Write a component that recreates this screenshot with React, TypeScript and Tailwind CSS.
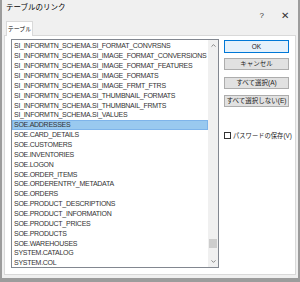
import { ChevronUp, ChevronDown } from "lucide-react"

const tables = [
  "SI_INFORMTN_SCHEMA.SI_FORMAT_CONVRSNS",
  "SI_INFORMTN_SCHEMA.SI_IMAGE_FORMAT_CONVERSIONS",
  "SI_INFORMTN_SCHEMA.SI_IMAGE_FORMAT_FEATURES",
  "SI_INFORMTN_SCHEMA.SI_IMAGE_FORMATS",
  "SI_INFORMTN_SCHEMA.SI_IMAGE_FRMT_FTRS",
  "SI_INFORMTN_SCHEMA.SI_THUMBNAIL_FORMATS",
  "SI_INFORMTN_SCHEMA.SI_THUMBNAIL_FRMTS",
  "SI_INFORMTN_SCHEMA.SI_VALUES",
  "SOE.ADDRESSES",
  "SOE.CARD_DETAILS",
  "SOE.CUSTOMERS",
  "SOE.INVENTORIES",
  "SOE.LOGON",
  "SOE.ORDER_ITEMS",
  "SOE.ORDERENTRY_METADATA",
  "SOE.ORDERS",
  "SOE.PRODUCT_DESCRIPTIONS",
  "SOE.PRODUCT_INFORMATION",
  "SOE.PRODUCT_PRICES",
  "SOE.PRODUCTS",
  "SOE.WAREHOUSES",
  "SYSTEM.CATALOG",
  "SYSTEM.COL",
]

const selected = "SOE.ADDRESSES"

const font = { fontFamily: '"Liberation Sans", "Noto Sans CJK JP", sans-serif' }

const Button = ({ label, primary }: { label: string; primary?: boolean }) => (
  <button
    className={
      primary
        ? "flex h-[13px] w-[65px] items-center justify-center whitespace-nowrap border border-[#0078d7] bg-[#e5f1fb] text-[6.5px] text-[#222]"
        : "flex h-[12px] w-[65px] items-center justify-center whitespace-nowrap border border-[#adadad] bg-[#e1e1e1] text-[6.5px] text-[#222]"
    }
  >
    {label}
  </button>
)

export default function App() {
  return (
    <div
      style={font}
      className="flex h-[282px] w-[300px] flex-col border-b-[4px] border-l-[2px] border-r-[2px] border-[#9c9c9c] bg-[#f0f0f0] text-black"
    >
      {/* title bar */}
      <div className="flex h-[21px] items-start justify-between bg-[#f0f0f0]">
        <span className="pl-[4px] pt-[3px] text-[7.5px] leading-[10px]">テーブルのリンク</span>
        <div className="flex items-center gap-[17px] pr-[9px] pt-[8px] text-[8px] text-[#333]">
          <span>?</span>
          <span className="text-[10px] font-light">✕</span>
        </div>
      </div>

      {/* tab */}
      <div className="flex pl-[4px]">
        <div className="z-10 -mb-px flex h-[15px] w-[27px] items-center justify-center whitespace-nowrap border border-b-0 border-[#d9d9d9] bg-white text-[6px]">
          テーブル
        </div>
      </div>

      {/* panel */}
      <div className="mx-[2px] flex h-[240px] gap-[5px] border border-[#d9d9d9] bg-white pl-[6px] pt-[3px]">
        <div className="flex h-[229px] w-[208px] border border-[#828790] bg-white">
          <ul className="flex-1 overflow-hidden pt-[1px]">
            {tables.map((t) => (
              <li
                key={t}
                className={
                  t === selected
                    ? "flex h-[9.87px] items-center whitespace-nowrap border border-[#7eb4ea] bg-[#99c9ef] pl-[1px] text-[7px] leading-none tracking-[-0.27px] text-[#333]"
                    : "flex h-[9.87px] items-center whitespace-nowrap pl-[2px] text-[7px] leading-none tracking-[-0.27px] text-[#333]"
                }
              >
                {t}
              </li>
            ))}
          </ul>
          <div className="flex w-[10px] flex-col items-center bg-[#f0f0f0]">
            <ChevronUp size={7} strokeWidth={2.5} className="mt-[2px] text-[#606060]" />
            <div className="flex-1" />
            <div className="mb-[10px] h-[9px] w-[8px] bg-[#cdcdcd]" />
            <ChevronDown size={7} strokeWidth={2.5} className="mb-[2px] text-[#606060]" />
          </div>
        </div>

        <div className="flex flex-col pt-[1px]">
          <Button label="OK" primary />
          <div className="mt-[5px]">
            <Button label="キャンセル" />
          </div>
          <div className="mt-[7px]">
            <Button label="すべて選択(A)" />
          </div>
          <div className="mt-[6px]">
            <Button label="すべて選択しない(E)" />
          </div>
          <label className="mt-[24px] flex items-center gap-[2px] whitespace-nowrap text-[6.3px] text-[#222]">
            <span className="h-[7px] w-[7px] border border-[#333] bg-white" />
            パスワードの保存(V)
          </label>
        </div>
      </div>
    </div>
  )
}
